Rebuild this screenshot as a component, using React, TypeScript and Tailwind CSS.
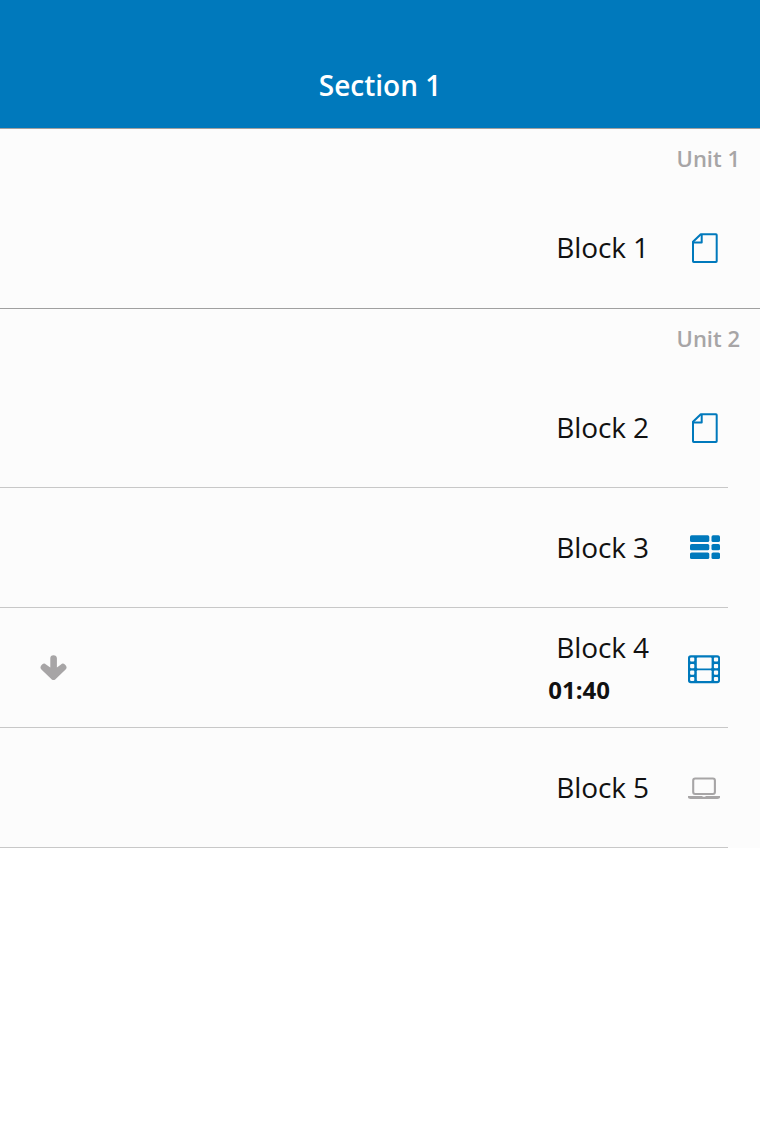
import type { ReactNode } from "react";

function PageIcon() {
  return (
    <svg width="32" height="32" viewBox="0 0 32 32" fill="none" stroke="#0079bc" strokeWidth="2" strokeLinejoin="round">
      <path d="M12.8 2.2H28a.7.7 0 0 1 .7.7V29.3a.7.7 0 0 1-.7.7H5.7a.7.7 0 0 1-.7-.7V9.8Z" />
      <path d="M13.7 2.2V10.6H5" />
    </svg>
  );
}

function ListIcon() {
  return (
    <svg width="32" height="32" viewBox="0 0 32 32" fill="#0079bc">
      <rect x="2" y="3.3" width="19.3" height="6.7" rx="1.6" />
      <rect x="23.5" y="3.3" width="8.5" height="6.7" rx="1.6" />
      <rect x="2" y="12" width="19.3" height="6.3" rx="1.6" />
      <rect x="23.5" y="12" width="8.5" height="6.3" rx="1.6" />
      <rect x="2" y="20.5" width="19.3" height="6.5" rx="1.6" />
      <rect x="23.5" y="20.5" width="8.5" height="6.5" rx="1.6" />
    </svg>
  );
}

function FilmIcon() {
  return (
    <svg width="32" height="32" viewBox="0 0 32 32">
      <rect x="0" y="3.3" width="32" height="28" rx="2.8" fill="#0079bc" />
      <g fill="#fcfcfc">
        <rect x="8.8" y="5.4" width="14.8" height="11" rx="1" />
        <rect x="8.8" y="18.3" width="14.8" height="10.8" rx="1" />
        <rect x="2.1" y="5.4" width="4.2" height="4.2" rx="1" />
        <rect x="2.1" y="12.1" width="4.2" height="4.1" rx="1" />
        <rect x="2.1" y="18.6" width="4.2" height="4.1" rx="1" />
        <rect x="2.1" y="25" width="4.2" height="4.1" rx="1" />
        <rect x="25.9" y="5.4" width="4.2" height="4.2" rx="1" />
        <rect x="25.9" y="12.1" width="4.2" height="4.1" rx="1" />
        <rect x="25.9" y="18.6" width="4.2" height="4.1" rx="1" />
        <rect x="25.9" y="25" width="4.2" height="4.1" rx="1" />
      </g>
    </svg>
  );
}

function LaptopIcon() {
  return (
    <svg width="32" height="32" viewBox="0 0 32 32">
      <rect x="5.2" y="6.5" width="21.7" height="15.5" rx="2" fill="none" stroke="#a7a5a6" strokeWidth="2.1" />
      <path d="M0 24H14.5V24.8H17.5V24H32V25.3C32 26.4 30.8 27 29.3 27H2.7C1.2 27 0 26.4 0 25.3Z" fill="#a7a5a6" />
    </svg>
  );
}

function DownloadIcon() {
  return (
    <svg width="28" height="28" viewBox="0 0 28 28">
      <path
        d="M10.3 4.2Q10.3 1.3 13.5 1.3T16.9 4.2V13.6L21 10.4Q22.9 8.8 24.9 10.5 27.9 13.2 25.6 15.5L15.2 25.4Q13.5 26.8 11.8 25.4L1.4 15.5Q-.8 13.2 2.1 10.5 4.1 8.8 6 10.4L10.3 13.6Z"
        fill="#a7a5a6"
      />
    </svg>
  );
}

function UnitHeader({ children }: { children: ReactNode }) {
  return (
    <h2 className="h-[60px] border-t border-[#a0a0a0] pr-5 pt-3.5 text-right text-[22px] leading-[30px] font-semibold text-[#a7a5a6]">
      {children}
    </h2>
  );
}

type BlockProps = { title: string; icon: ReactNode; duration?: string; divider?: boolean };

function BlockRow({ title, icon, duration, divider = true }: BlockProps) {
  return (
    <div className="flex h-[120px] justify-end">
      <div className={divider ? "flex w-[728px] justify-between border-b border-[#c8c8c8]" : "flex w-[728px] justify-between"}>
        <div className="flex w-24 items-center pl-10">{duration && <DownloadIcon />}</div>
        <div className="flex items-center pr-2">
          <div className={duration ? "flex w-[140px] flex-col items-end pt-0.5 pr-px" : "flex w-[140px] flex-col items-end pr-px pb-0.5"}>
            <span className="text-[28px] leading-[38px] tracking-[-0.09px] whitespace-nowrap">{title}</span>
            {duration && <span className="mt-[5px] mr-[39px] text-2xl leading-[38px] font-bold">{duration}</span>}
          </div>
          <div className="ml-[38px]">{icon}</div>
        </div>
      </div>
      <div className="w-8" />
    </div>
  );
}

export default function App() {
  return (
    <div className="min-h-[1136px] w-[760px] bg-white font-['Open_Sans',sans-serif] text-[#111111]">
      <header className="flex h-32 items-end justify-center bg-[#0079bc] pb-6">
        <h1 className="text-[28px] leading-[38px] font-semibold text-white antialiased">Section 1</h1>
      </header>
      <main className="bg-[#fcfcfc]">
        <UnitHeader>Unit 1</UnitHeader>
        <BlockRow title="Block 1" icon={<PageIcon />} divider={false} />
        <UnitHeader>Unit 2</UnitHeader>
        <BlockRow title="Block 2" icon={<PageIcon />} />
        <BlockRow title="Block 3" icon={<ListIcon />} />
        <BlockRow title="Block 4" icon={<FilmIcon />} duration="01:40" />
        <BlockRow title="Block 5" icon={<LaptopIcon />} />
      </main>
    </div>
  );
}
